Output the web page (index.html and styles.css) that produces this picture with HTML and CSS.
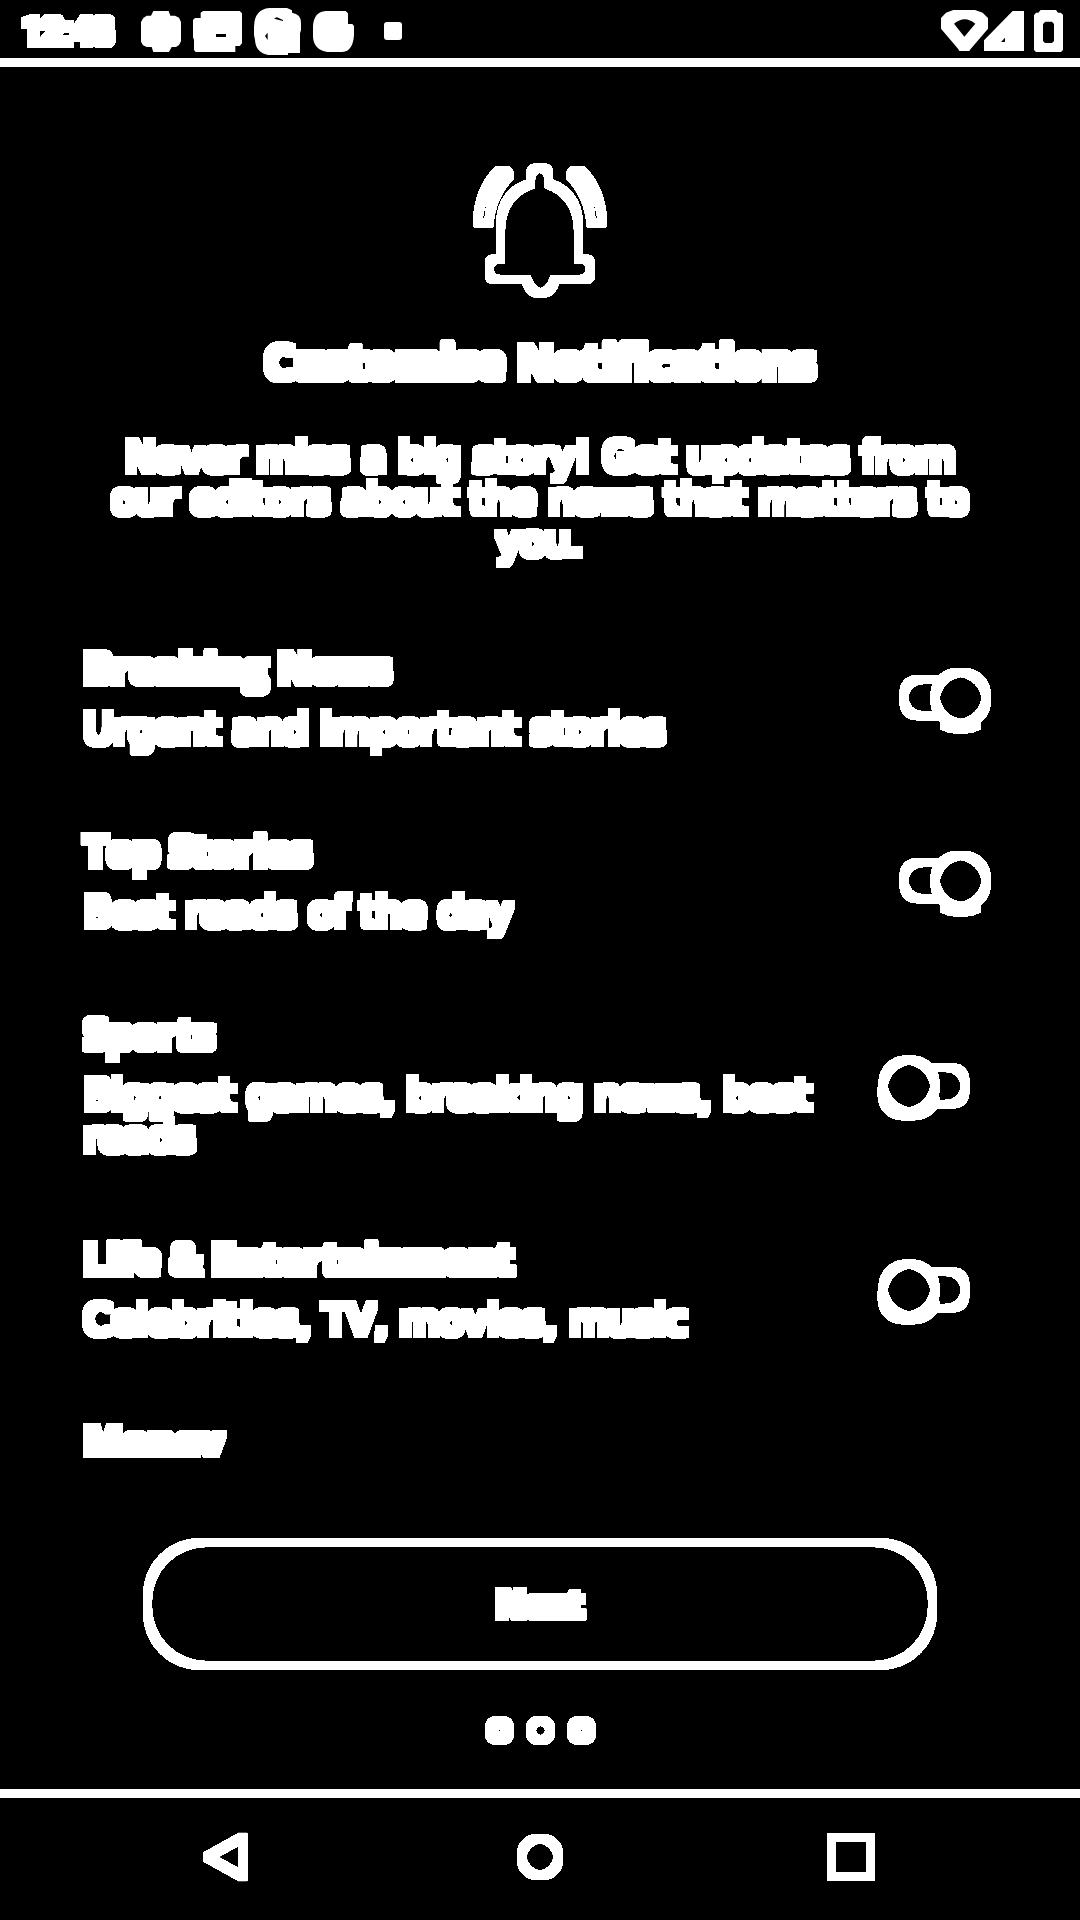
FILE: index.html
```html
<!DOCTYPE html>
<html lang="en">
<head>
<meta charset="utf-8">
<meta name="viewport" content="width=device-width, initial-scale=1">
<title>Customise Notifications</title>
<link rel="stylesheet" href="styles.css">
</head>
<body>
<svg class="defs" aria-hidden="true">
  <filter id="thicken" x="-20%" y="-20%" width="140%" height="140%" color-interpolation-filters="sRGB">
    <feMorphology operator="dilate" radius="4"/>
    <feComponentTransfer><feFuncA type="linear" slope="20" intercept="-4"/></feComponentTransfer>
  </filter>
</svg>
<div class="app">
  <header class="status">
    <time class="clock thick">12:48</time>
    <div class="alerts">
      <svg width="40" height="50" viewBox="423 15 120 150"><path d="M460 33H506L511 47H525L537 53L543 66V124L537 135L528 141H515L507 156H460L455 141H440L429 136L423 125V66L430 54L440 47H453Z"/></svg>
      <svg width="49" height="50" viewBox="582 15 147 150"><path fill-rule="evenodd" d="M612 33H722L729 40V130L722 138H709V156H590L585 150V120L582 112V60L588 54H605V38ZM651 102V111H681V102Z"/></svg>
      <svg width="47" height="50" viewBox="759 15 141 150"><path fill-rule="evenodd" d="M805 24H858L873 31V38Q900 42 900 68V90L897 100V159H861V165H802Q764 158 762 120L759 105V80Q760 28 805 24ZM819 55L828 52L846 60V63L825 58ZM800 98V120L792 108Z"/></svg>
      <svg width="41" height="50" viewBox="942 15 123 150"><path d="M980 33H1040L1047 40V72H1060L1065 78V105Q1062 154 1030 156H985Q945 150 942 112V78Q945 35 980 33Z"/></svg>
      <svg class="more" width="18" height="50" viewBox="1152 15 54 150"><rect x="1152" y="66" width="54" height="54" rx="9"/></svg>
    </div>
    <svg class="signals" width="122" height="50" viewBox="123 15 366 150"><path fill-rule="evenodd" d="M160 30H225L248 38L264 54V86L212 147L208 153H178L174 146L123 86V54L138 38ZM162 71L193 110L226 71Q194 44 162 71Z"/><path fill-rule="evenodd" d="M338 33H372V153H252V121ZM315 113L303 126H315Z"/><path fill-rule="evenodd" d="M422 30H468L474 38H482L489 44V150L483 156H408L402 150V46L408 38H415ZM436 65L429 72V123L435 129H456L462 123V72L456 65Z"/></svg>
  </header>

  <main class="main thick">
    <svg class="bell" width="140" height="145" viewBox="90 54 420 435" role="img" aria-label="Ringing bell">
      <path d="M300 84C318 84 326 92 326 110V132C385 150 415 200 415 262V357H430Q451 357 451 380V397Q451 418 430 418H345C335 445 325 459 301 459C277 459 270 445 258 418H169Q148 418 148 397V380Q148 357 169 357H182V262C182 200 212 150 272 132V110C272 92 282 84 300 84Z"/>
      <path d="M113 249C115 190 135 135 178 92H196L208 106C170 145 150 190 147 249Z"/>
      <path d="M487 249C485 190 465 135 422 92H404L392 106C430 145 450 190 453 249Z"/>
    </svg>
    <h1 class="title">Customise Notifications</h1>
    <p class="intro">Never miss a big story! Get updates from our editors about the news that matters to you.</p>

    <div class="topics">
      <label class="topic">
        <span class="text"><span class="name">Breaking News</span><span class="about">Urgent and important stories</span></span>
        <span class="switch"><input type="checkbox" checked>
          <svg width="130" height="70" viewBox="30 78 390 210"><circle cx="302" cy="174" r="77"/><path d="M253 240V255Q302 280 350 255V240M240 118H186Q131 118 131 173Q131 228 186 228H240"/></svg></span>
      </label>
      <label class="topic">
        <span class="text"><span class="name">Top Stories</span><span class="about">Best reads of the day</span></span>
        <span class="switch"><input type="checkbox" checked>
          <svg width="130" height="70" viewBox="30 78 390 210"><circle cx="302" cy="174" r="77"/><path d="M253 240V255Q302 280 350 255V240M240 118H186Q131 118 131 173Q131 228 186 228H240"/></svg></span>
      </label>
      <label class="topic">
        <span class="text"><span class="name">Sports</span><span class="about">Biggest games, breaking news, best reads</span></span>
        <span class="switch"><input type="checkbox">
          <svg width="130" height="70" viewBox="30 67 390 210"><circle cx="147" cy="166" r="78"/><path d="M66 180Q70 256 147 256Q200 256 226 212M222 110H265Q316 112 316 166Q316 221 265 221H222"/></svg></span>
      </label>
      <label class="topic">
        <span class="text"><span class="name">Life &amp; Entertainment</span><span class="about">Celebrities, TV, movies, music</span></span>
        <span class="switch"><input type="checkbox">
          <svg width="130" height="70" viewBox="30 67 390 210"><circle cx="147" cy="166" r="78"/><path d="M66 180Q70 256 147 256Q200 256 226 212M222 110H265Q316 112 316 166Q316 221 265 221H222"/></svg></span>
      </label>
      <div class="topic"><span class="name">Money</span></div>
    </div>

    <button class="next" type="button">Next</button>
    <div class="pages"><span class="page"></span><span class="page current"></span><span class="page"></span></div>
  </main>

  <nav class="nav">
    <button type="button" aria-label="Back"><svg class="thick" width="48" height="48" viewBox="0 0 48 48"><path d="M6 24L42 4V44Z"/></svg></button>
    <button type="button" aria-label="Home"><svg class="thick" width="48" height="48" viewBox="0 0 48 48"><circle cx="24" cy="24" r="18.5"/></svg></button>
    <button type="button" aria-label="Recent apps"><svg class="thick" width="48" height="48" viewBox="0 0 48 48"><rect x="0.5" y="4.5" width="39" height="39"/></svg></button>
  </nav>
</div>
</body>
</html>
```
FILE: styles.css
```css
* { box-sizing: border-box; }

body {
  margin: 0;
  background: #000;
  color: #fff;
  font-family: "Open Sans", "Noto Sans", sans-serif;
}

svg { display: block; fill: #fff; flex: none; }

.defs { position: absolute; width: 0; height: 0; }

.thick { filter: url(#thicken); }

.app { display: flex; flex-direction: column; height: 100vh; }

.status {
  display: flex;
  align-items: flex-start;
  height: 67px;
  padding: 5px 17px 0 22px;
  border-bottom: 9px solid #fff;
}

.clock { width: 119px; font: 500 36px/54px Roboto, "Liberation Sans", sans-serif; }

.alerts { display: flex; gap: 12px; }

.more { margin-left: 18px; }

.signals { margin-left: auto; }

.main {
  display: flex;
  flex: 1;
  flex-direction: column;
  align-items: center;
  min-height: 0;
  padding: 91px 80px 48px;
}

.bell, .switch svg, .nav svg { fill: none; stroke: #fff; stroke-width: 3; overflow: visible; }

.title { margin: 32px 0 49px; font-size: 46px; line-height: 52px; font-weight: 700; }

.intro {
  margin: 0 20px 43px;
  font-family: "DejaVu Sans", sans-serif;
  font-size: 40px;
  line-height: 42px;
  text-align: center;
}

.topics { flex: 1; align-self: stretch; min-height: 0; padding-left: 4px; overflow: hidden; }

.topic { display: flex; align-items: center; padding: 38px 0; }

.text { display: flex; flex: 1; flex-direction: column; gap: 17px; }

.name { font-size: 41px; line-height: 48px; font-weight: 700; }

.about { font-family: "DejaVu Sans", sans-serif; font-size: 40px; line-height: 42px; }

.switch { position: relative; margin-top: 8px; }

.switch input { position: absolute; inset: 0; width: 100%; height: 100%; margin: 0; opacity: 0; }

.next {
  flex: none;
  align-self: stretch;
  height: 124px;
  margin: 88px 67px 54px;
  border: 1px solid #fff;
  border-radius: 56px;
  background: none;
  color: #fff;
  font: 700 36px/42px "Open Sans", "Noto Sans", sans-serif;
}

.pages { display: flex; gap: 20px; }

.page { width: 21px; height: 21px; border: 4px solid #fff; border-radius: 50%; }

.current { border-width: 1px; }

.nav {
  display: flex;
  height: 131px;
  padding: 0 67px 4px;
  border-top: 9px solid #fff;
}

.nav button { display: flex; flex: 1; align-items: center; justify-content: center; padding: 0; border: 0; background: none; }

.nav svg { stroke-width: 1; }
```
